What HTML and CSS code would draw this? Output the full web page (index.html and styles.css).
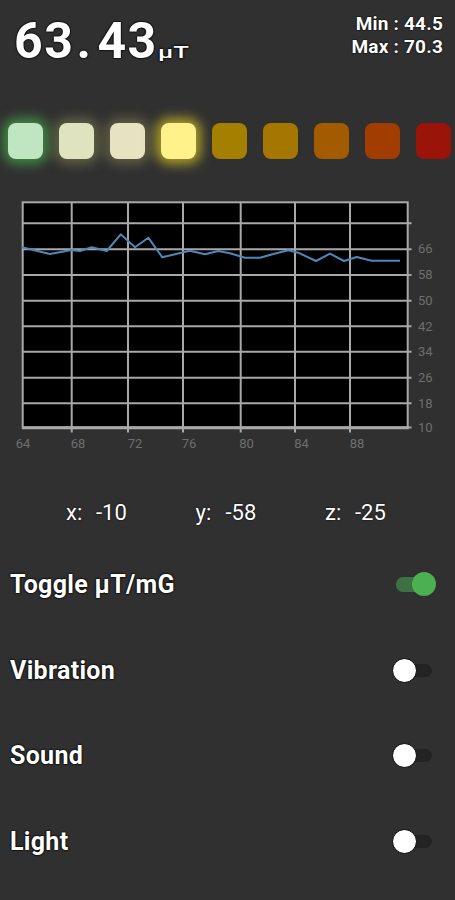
FILE: index.html
```html
<!DOCTYPE html>
<html lang="en">
<head>
    <meta charset="UTF-8">
    <meta name="viewport" content="width=device-width, initial-scale=1.0">
    <title>Magnetometer</title>
    <link rel="stylesheet" href="styles.css">
</head>
<body>
    <div class="app">
        <div class="header">
            <div class="reading">
                <span class="value">63<span class="dot">.</span>43</span><span class="unit">µT</span>
            </div>
            <div class="range">
                <div>Min : 44.5</div>
                <div>Max : 70.3</div>
            </div>
        </div>

        <div class="lights">
            <div class="light l1"></div>
            <div class="light l2"></div>
            <div class="light l3"></div>
            <div class="light l4"></div>
            <div class="light l5"></div>
            <div class="light l6"></div>
            <div class="light l7"></div>
            <div class="light l8"></div>
            <div class="light l9"></div>
        </div>

        <svg class="chart" width="455" height="260" viewBox="0 195 455 260">
            <rect x="22" y="202" width="385.7" height="225.7" fill="#000"/>
            <g class="grid" stroke="#a9a9a9" stroke-width="2">
                <line x1="71.7" y1="202" x2="71.7" y2="432.5"/>
                <line x1="128" y1="202" x2="128" y2="432.5"/>
                <line x1="183" y1="202" x2="183" y2="432.5"/>
                <line x1="240.7" y1="202" x2="240.7" y2="432.5"/>
                <line x1="295" y1="202" x2="295" y2="432.5"/>
                <line x1="350" y1="202" x2="350" y2="432.5"/>
                <line x1="22" y1="223.3" x2="411.5" y2="223.3"/>
                <line x1="22" y1="249.3" x2="411.5" y2="249.3"/>
                <line x1="22" y1="275" x2="411.5" y2="275"/>
                <line x1="22" y1="300.7" x2="411.5" y2="300.7"/>
                <line x1="22" y1="326.3" x2="411.5" y2="326.3"/>
                <line x1="22" y1="351.7" x2="411.5" y2="351.7"/>
                <line x1="22" y1="377.7" x2="411.5" y2="377.7"/>
                <line x1="22" y1="403.3" x2="411.5" y2="403.3"/>
                <line x1="407.7" y1="427.5" x2="411.5" y2="427.5"/>
                <rect x="22.7" y="202.3" width="385" height="225.2" fill="none"/>
                <line x1="22" y1="427.8" x2="408.7" y2="427.8" stroke-width="3"/>
            </g>
            <polyline fill="none" stroke="#4f87b8" stroke-width="2" stroke-linejoin="round"
                points="22,247.3 33.3,250 50,254 71.7,250 80,251 91.7,247.3 106.7,251 120.7,234.3 135,247.3 148.3,237.7 162.3,257.3 183.3,252.3 190,250.7 205,254.3 218.3,251 230,253.3 245,257.7 260,257.7 273.3,254 288.3,250.3 298.3,252.7 316,261 330,253.7 344,261 356.7,257 371.7,260.7 400,260.7"/>
            <g class="ylabels">
                <text x="418" y="248">66</text>
                <text x="418" y="274">58</text>
                <text x="418" y="300">50</text>
                <text x="418" y="326">42</text>
                <text x="418" y="351.5">34</text>
                <text x="418" y="377">26</text>
                <text x="418" y="403">18</text>
                <text x="418" y="427.5">10</text>
            </g>
            <g class="xlabels">
                <text x="23" y="443.5">64</text>
                <text x="78" y="443.5">68</text>
                <text x="135" y="443.5">72</text>
                <text x="189" y="443.5">76</text>
                <text x="246.5" y="443.5">80</text>
                <text x="301.5" y="443.5">84</text>
                <text x="357" y="443.5">88</text>
            </g>
        </svg>

        <div class="axes">
            <div class="axis"><span class="axis-name">x:</span><span>-10</span></div>
            <div class="axis"><span class="axis-name">y:</span><span>-58</span></div>
            <div class="axis"><span class="axis-name">z:</span><span>-25</span></div>
        </div>

        <div class="settings">
            <div class="setting">
                <span class="label">Toggle µT/mG</span>
                <div class="switch on"><div class="thumb"></div></div>
            </div>
            <div class="setting">
                <span class="label">Vibration</span>
                <div class="switch"><div class="thumb"></div></div>
            </div>
            <div class="setting">
                <span class="label">Sound</span>
                <div class="switch"><div class="thumb"></div></div>
            </div>
            <div class="setting">
                <span class="label">Light</span>
                <div class="switch"><div class="thumb"></div></div>
            </div>
        </div>
    </div>
</body>
</html>
```

FILE: styles.css
```css
body {
  margin: 0;
  background-color: #303030;
  color: #fff;
  font-family: Roboto, "Noto Sans", sans-serif;
}

.app {
  width: 455px;
  height: 900px;
  overflow: hidden;
}

.header {
  display: flex;
  justify-content: space-between;
  align-items: flex-start;
  padding: 0 12px 0 14px;
  height: 104px;
}

.reading {
  margin-top: 12px;
  white-space: nowrap;
  text-shadow: 0 0 2px #000, 0 0 2px #000, 0 0 1px #000;
}

.value {
  font-size: 50px;
  font-weight: 700;
  letter-spacing: 1.5px;
}

.dot {
  margin: 0 5px 0 2px;
}

.unit {
  display: inline-block;
  font-size: 16px;
  font-weight: 500;
  transform: scaleX(1.6);
  transform-origin: left bottom;
}

.range {
  margin-top: 12px;
  text-align: right;
  font-size: 19px;
  font-weight: 700;
  letter-spacing: 0.2px;
  line-height: 23px;
  text-shadow: 0 0 2px #000, 0 0 1px #000;
}

.lights {
  display: flex;
  gap: 15.5px;
  padding-left: 7.5px;
  margin-top: 19px;
  height: 72px;
}

.light {
  width: 35.5px;
  height: 36px;
  border-radius: 8px;
}

.l1 {
  background-color: #bfe6c0;
  box-shadow: 0 0 12px 5px rgba(76, 175, 80, 0.7);
}

.l2 {
  background-color: #dfe3bf;
  box-shadow: 0 0 12px 5px rgba(170, 175, 100, 0.4);
}

.l3 {
  background-color: #e6e2c2;
  box-shadow: 0 0 12px 5px rgba(170, 165, 100, 0.4);
}

.l4 {
  background-color: #fff28a;
  box-shadow: 0 0 12px 5px rgba(240, 220, 40, 0.65);
}

.l5 { background-color: #a57f00; }
.l6 { background-color: #a67700; }
.l7 { background-color: #a35b00; }
.l8 { background-color: #a13d00; }
.l9 { background-color: #9b1409; }

.chart {
  display: block;
}

.chart text {
  font-family: Roboto, sans-serif;
  font-size: 13px;
  fill: #6e6e6e;
  dominant-baseline: central;
}

.xlabels text {
  text-anchor: middle;
}

.axes {
  display: flex;
  margin-top: 43px;
  padding-left: 66px;
  height: 28px;
  align-items: center;
  font-size: 22px;
  text-shadow: 0 0 2px #000;
}

.axis {
  display: flex;
  width: 129.5px;
}

.axis-name {
  width: 30px;
}

.settings {
  margin-top: 16px;
}

.setting {
  display: flex;
  justify-content: space-between;
  align-items: center;
  height: 85.5px;
  padding: 0 23px 0 10px;
}

.label {
  font-size: 25px;
  font-weight: 700;
  letter-spacing: 0.3px;
  text-shadow: 0 0 2px #000, 0 0 2px #000, 0 0 1px #000;
}

.switch {
  position: relative;
  width: 36px;
  height: 13px;
  border-radius: 7px;
  background-color: #232323;
}

.thumb {
  position: absolute;
  top: -6px;
  left: -4px;
  width: 23px;
  height: 23px;
  border-radius: 50%;
  background-color: #fff;
  border: 1px solid #000;
}

.switch.on {
  height: 15px;
  background-color: #3f7043;
}

.switch.on .thumb {
  top: -5px;
  left: 16px;
  border: none;
  width: 24px;
  height: 24px;
  background-color: #4cb050;
}
```
